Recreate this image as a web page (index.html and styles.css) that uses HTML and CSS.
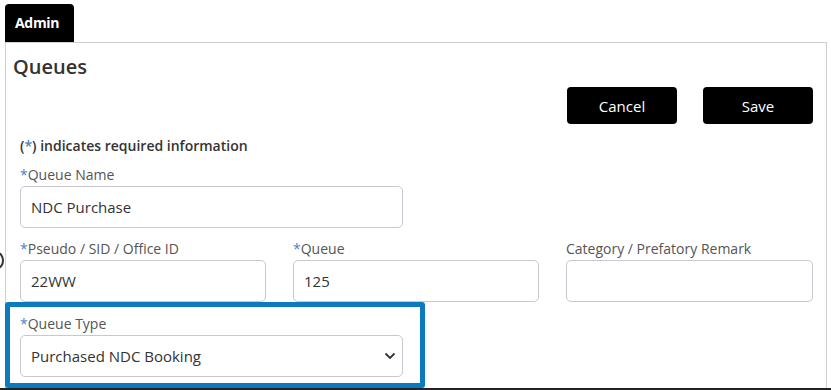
FILE: index.html
```html
<!DOCTYPE html>
<html>
<head>
  <title>Queues</title>
  <meta name="viewport" content="width=device-width, initial-scale=1.0">
  <link rel="stylesheet" href="styles.css">
</head>
<body>
  <span class="edge-mark"></span>

  <div class="tab">Admin</div>

  <div class="panel">
    <h1>Queues</h1>

    <div class="actions">
      <button type="button">Cancel</button>
      <button type="submit">Save</button>
    </div>

    <div class="queue-form">
      <p class="required-note">(<span class="star">*</span>) indicates required information</p>

      <div class="field wide">
        <label for="queueName"><span class="star">*</span>Queue Name</label>
        <input type="text" id="queueName" value="NDC Purchase">
      </div>

      <div class="row">
        <div class="field">
          <label for="pseudo"><span class="star">*</span>Pseudo / SID / Office ID</label>
          <input type="text" id="pseudo" value="22WW">
        </div>
        <div class="field">
          <label for="queue"><span class="star">*</span>Queue</label>
          <input type="text" id="queue" value="125">
        </div>
        <div class="field">
          <label for="category">Category / Prefatory Remark</label>
          <input type="text" id="category">
        </div>
      </div>

      <div class="field wide">
        <label for="queueType"><span class="star">*</span>Queue Type</label>
        <div class="select-wrap">
          <select id="queueType">
            <option>Purchased NDC Booking</option>
          </select>
          <svg class="chevron" width="12" height="8" viewBox="0 0 12 8">
            <path d="M1.5 1.5 L6 6 L10.5 1.5" fill="none" stroke="#333" stroke-width="1.8"/>
          </svg>
        </div>
      </div>
    </div>
  </div>

  <!-- highlight around queue type -->
  <div class="highlight"></div>
</body>
</html>
```

FILE: styles.css
```css
body {
  margin: 0;
  padding: 0;
  background-color: #fff;
  font-family: "Open Sans", Arial, sans-serif;
  color: #333;
  height: 390px;
  overflow: hidden;
  position: relative;
  box-sizing: border-box;
  border-bottom: 2px solid #222;
}

.edge-mark {
  position: absolute;
  left: -9px;
  top: 252px;
  width: 9px;
  height: 13px;
  border: 2px solid #333;
  border-radius: 50%;
}

.tab {
  margin: 4px 0 0 5px;
  width: 69px;
  height: 38px;
  box-sizing: border-box;
  background-color: #000;
  color: #fff;
  font-size: 14px;
  font-weight: 700;
  letter-spacing: -0.3px;
  line-height: 38px;
  padding-left: 10px;
  border-radius: 4px 4px 0 0;
}

.panel {
  margin: 0 4px 0 5px;
  height: 348px;
  box-sizing: border-box;
  border: 1px solid #cfcfcf;
  border-bottom: none;
}

h1 {
  margin: 10px 0 0 7px;
  font-size: 20px;
  font-weight: 600;
  line-height: 28px;
  color: #333;
}

.actions {
  display: flex;
  justify-content: flex-end;
  gap: 26px;
  margin: 6px 13px 0 0;
}

button {
  width: 110px;
  height: 37px;
  background-color: #000;
  color: #fff;
  border: none;
  border-radius: 4px;
  font-family: "Open Sans", Arial, sans-serif;
  font-size: 15px;
  font-weight: 500;
}

.queue-form {
  padding: 0 13px 0 14px;
}

.required-note {
  margin: 12px 0 9px;
  font-size: 14px;
  font-weight: 600;
  line-height: 20px;
  color: #333;
}

.star {
  color: #4d82c6;
}

.field {
  display: flex;
  flex-direction: column;
}

.field.wide {
  width: 383px;
}

label {
  font-size: 14px;
  line-height: 19px;
  color: #555;
  margin-bottom: 2px;
}

input,
select {
  height: 42px;
  box-sizing: border-box;
  border: 1px solid #cbc6cf;
  border-radius: 5px;
  padding: 0 10px;
  font-family: "Open Sans", Arial, sans-serif;
  font-size: 15px;
  color: #333;
  background-color: #fff;
}

.row {
  display: grid;
  grid-template-columns: 246px 246px 247px;
  gap: 27px;
  margin: 11px 0 12px;
}

.select-wrap {
  position: relative;
}

select {
  width: 100%;
  appearance: none;
  -webkit-appearance: none;
}

.chevron {
  position: absolute;
  right: 7px;
  top: 17px;
}

.highlight {
  position: absolute;
  left: 5px;
  top: 302px;
  width: 420px;
  height: 86px;
  box-sizing: border-box;
  border: 5px solid #0b7bbd;
  border-radius: 3px;
}
```
